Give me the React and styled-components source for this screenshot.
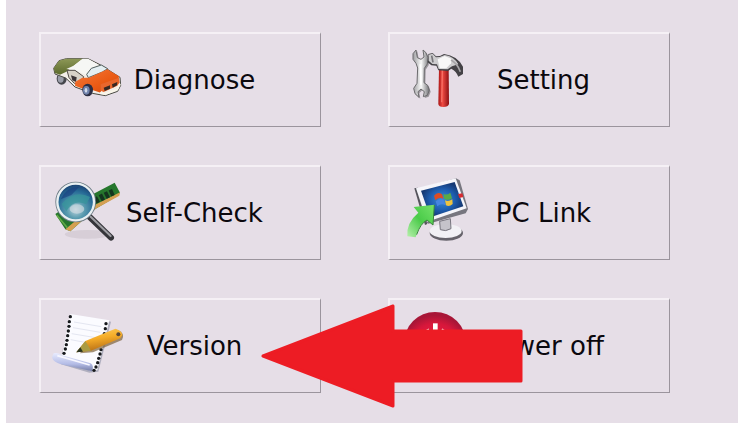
import React from "react";
import styled, { createGlobalStyle } from "styled-components";

const CarIcon = () => (
  <Icon viewBox="18 -3 216 216" aria-hidden="true">
    <defs>
      <linearGradient id="carHood" x1="0" y1="0" x2="1" y2="1">
        <stop offset="0" stopColor="#f47a3c" />
        <stop offset="0.6" stopColor="#ea5a14" />
        <stop offset="1" stopColor="#c94a14" />
      </linearGradient>
      <linearGradient id="carRear" x1="0" y1="0" x2="0" y2="1">
        <stop offset="0" stopColor="#8d9857" />
        <stop offset="1" stopColor="#5c6a2c" />
      </linearGradient>
    </defs>
    <ellipse cx="50" cy="101" rx="15" ry="18" fill="#45464c" />
    <ellipse cx="47" cy="101" rx="9" ry="12" fill="#9a9da8" />
    <path
      d="M26 70 42 47 64 41 129 41 167 60 225 97 227 121 218 139 181 152 142 145 90 126 62 99 30 87Z"
      fill="#f2eee8"
      stroke="#4b4b43"
      strokeWidth="3"
    />
    <path d="M26 70 42 47 64 41 113 41 86 62 64 80 45 89 30 84Z" fill="url(#carRear)" />
    <path d="M113 41 129 41 158 58 135 74 125 91 91 76 64 72 86 62Z" fill="#f6f7f4" />
    <path d="M66 76 90 76 116 95 108 119 88 115 72 98Z" fill="#d8d2c8" stroke="#4f4a46" strokeWidth="3" />
    <path d="M78 91 95 97 93 111 82 106Z" fill="#3b3437" />
    <path d="M125 88 139 70 169 60 188 71 172 81 130 98Z" fill="#e4eff2" stroke="#53605f" strokeWidth="3" />
    <path d="M91 110 112 98 132 98 187 73 222 94 219 108 170 123 167 143 142 135 109 130 90 122Z" fill="url(#carHood)" />
    <path d="M167 118 222 98 224 113 217 122 176 141 167 137Z" fill="#e9672d" />
    <path d="M176 128 195 121 195 131 179 138ZM201 118 217 111 216 121 203 128Z" fill="#382822" />
    <path d="M165 144 181 147 217 133 225 116" fill="none" stroke="#faf6e9" strokeWidth="6" />
    <ellipse cx="128" cy="135" rx="16" ry="19" fill="#2c2e43" />
    <ellipse cx="124" cy="136" rx="10" ry="13" fill="#7183ac" />
    <ellipse cx="123" cy="136" rx="4" ry="7" fill="#d2d9e8" />
  </Icon>
);

const ToolsIcon = () => (
  <Icon viewBox="-15 6 216 216" aria-hidden="true">
    <defs>
      <linearGradient id="steel" x1="0" y1="0" x2="1" y2="0">
        <stop offset="0" stopColor="#9c9c9f" />
        <stop offset="0.5" stopColor="#fafafa" />
        <stop offset="1" stopColor="#6f6f73" />
      </linearGradient>
      <linearGradient id="handle" x1="0" y1="0" x2="1" y2="0">
        <stop offset="0" stopColor="#a91515" />
        <stop offset="0.4" stopColor="#ef4a42" />
        <stop offset="1" stopColor="#8d1013" />
      </linearGradient>
    </defs>
    <path
      d="M33 24 24 35 24 52 33 64 38 78 36 124 26 139 30 155 42 166 39 149 48 141 58 149 55 164 67 160 73 145 68 130 57 122 58 79 67 66 69 46 62 31 54 24 57 45 48 52 37 47Z"
      transform="translate(4 4)"
      fill="#5b595c"
      opacity="0.55"
    />
    <path
      d="M33 24 24 35 24 52 33 64 38 78 36 124 26 139 30 155 42 166 39 149 48 141 58 149 55 164 67 160 73 145 68 130 57 122 58 79 67 66 69 46 62 31 54 24 57 45 48 52 37 47Z"
      fill="url(#steel)"
      stroke="#6c6b6e"
      strokeWidth="3"
    />
    <path d="M46 67 48 128" stroke="#fff" strokeWidth="5" />
    <path d="M102 80 100 186Q101 195 115 195Q130 195 132 186L131 80Z" fill="url(#handle)" />
    <path d="M112 84 110 181" stroke="#ff8478" strokeWidth="4" opacity="0.7" />
    <path
      d="M70 36 83 33 93 43 105 42 117 36Q157 41 174 74L174 96 160 104Q154 88 139 80L129 87 100 85 94 71 79 70 68 61Z"
      fill="#444246"
    />
    <path d="M71 38 83 35 93 46 104 45 119 39Q147 43 160 67L141 73 128 82 101 81 96 67 82 66 71 56Z" fill="#cdccce" />
    <path d="M98 52 119 42 141 51 138 64 124 79 104 79Z" fill="#f8f8f8" />
    <path d="M138 54Q157 64 166 89" fill="none" stroke="#a7a5a8" strokeWidth="5" />
    <path d="M80 41 84 61" stroke="#77757a" strokeWidth="5" />
  </Icon>
);

const MagnifierIcon = () => (
  <Icon viewBox="18 5 216 216" aria-hidden="true">
    <defs>
      <radialGradient id="lens" cx="0.5" cy="0.7" r="0.65">
        <stop offset="0" stopColor="#bdd3dd" />
        <stop offset="0.35" stopColor="#5b9db0" />
        <stop offset="0.75" stopColor="#266a96" />
        <stop offset="1" stopColor="#1b4374" />
      </radialGradient>
    </defs>
    <ellipse cx="127" cy="177" rx="68" ry="13" fill="#b9b2bb" opacity="0.35" />
    <path d="M31 116 50 103 146 55 209 22 225 52 217 62 152 100 76 168 61 162Z" fill="#26762d" />
    <path d="M61 162 76 168 152 100 223 61 225 51 149 89Z" fill="#d5a052" />
    <path d="M35 119 67 157" stroke="#62a846" strokeWidth="5" />
    <path d="M151 65 160 82M166 57 175 75M181 50 190 68M196 43 204 61" stroke="#14351f" strokeWidth="11" />
    <path d="M134 125 198 187" stroke="#35353a" strokeWidth="18" strokeLinecap="round" />
    <path d="M137 124 197 182" stroke="#9d9da2" strokeWidth="6" strokeLinecap="round" />
    <circle cx="92" cy="80" r="57" fill="url(#lens)" stroke="#6e7c86" strokeWidth="8" />
    <path d="M47 72Q66 32 102 35L79 59Z" fill="#193c7e" opacity="0.6" />
    <path d="M50 86Q88 42 135 65L124 87Q87 70 64 107Z" fill="#37949b" opacity="0.75" />
    <ellipse cx="96" cy="101" rx="22" ry="14" fill="#d1dce2" opacity="0.65" />
    <circle cx="92" cy="80" r="55" fill="none" stroke="#e8f0f2" strokeWidth="7" />
  </Icon>
);

const MonitorIcon = () => (
  <Icon viewBox="0 5 216 216" aria-hidden="true">
    <defs>
      <radialGradient id="screen">
        <stop offset="0" stopColor="#398edc" />
        <stop offset="0.6" stopColor="#1e5daf" />
        <stop offset="1" stopColor="#153974" />
      </radialGradient>
      <linearGradient id="greenArrow" x1="0" y1="1" x2="1" y2="0">
        <stop offset="0" stopColor="#b8f0ad" />
        <stop offset="0.5" stopColor="#4acb49" />
        <stop offset="1" stopColor="#76e26a" />
      </linearGradient>
    </defs>
    <path d="M43 39 53 37 82 146 75 149Z" fill="#55545c" />
    <ellipse cx="139" cy="173" rx="50" ry="23" fill="#66636b" />
    <ellipse cx="137" cy="167" rx="48" ry="21" fill="#f2f1f5" />
    <path d="M119 138 151 130 153 160Q137 170 121 163Z" fill="#c5c3ca" stroke="#77757e" strokeWidth="3" />
    <path d="M50 42 168 9 179 15 204 101 197 114 85 145 77 139Z" fill="#77767f" />
    <path d="M48 39 167 9 200 99 82 139Z" fill="#f5f5fa" />
    <path d="M63 46 164 20 190 93 91 126Z" fill="url(#screen)" />
    <path d="M102 61Q113 48 126 57L131 71Q118 63 106 75Z" fill="#dc4c24" />
    <path d="M130 56Q141 61 151 52L156 69Q146 77 133 71Z" fill="#58aa48" />
    <path d="M107 78Q119 67 132 75L137 90Q123 83 112 93Z" fill="#4785e0" />
    <path d="M135 75Q145 80 157 72L158 86Q148 95 138 90Z" fill="#efc33f" />
    <path d="M174 56 187 54 190 65 178 68Z" fill="#d62b32" />
    <path
      d="M41 95 103 88 99 149 81 134Q58 145 47 186L22 183Q18 143 55 112Z"
      fill="url(#greenArrow)"
    />
    <path d="M103 89 99 149 81 134Q61 145 50 178" fill="none" stroke="#38863b" strokeWidth="3" />
  </Icon>
);

const notebookHoles = [
  [76, 33], [73, 48], [72, 62], [70, 76], [68, 90], [66, 104], [64, 117], [61, 130], [57, 143],
  [183, 54], [181, 69], [178, 84], [168, 132], [165, 145], [161, 158], [158, 171], [153, 184], [147, 194],
];

const NotebookIcon = () => (
  <Icon viewBox="18 13 216 216" aria-hidden="true">
    <defs>
      <linearGradient id="roll" x1="0" y1="0" x2="0" y2="1">
        <stop offset="0" stopColor="#e9ecff" />
        <stop offset="0.6" stopColor="#b4bce6" />
        <stop offset="1" stopColor="#737ba4" />
      </linearGradient>
      <linearGradient id="pencil" x1="0" y1="0" x2="0.3" y2="1">
        <stop offset="0" stopColor="#ffd364" />
        <stop offset="0.5" stopColor="#f5ac28" />
        <stop offset="1" stopColor="#b76e16" />
      </linearGradient>
    </defs>
    <path d="M79 29 198 48 160 198 133 201 48 176 50 145Z" fill="#989bae" opacity="0.7" />
    <path d="M76 25 193 44 157 193 142 197 39 164 52 142Z" fill="#fbfbff" />
    <path d="M87 49 169 63M84 66 166 80M80 84 158 97M77 102 120 110" stroke="#e4e6f1" strokeWidth="3" />
    <path d="M26 143Q37 139 49 148L137 173Q148 180 141 197L48 176Q25 170 21 155Z" fill="url(#roll)" />
    <path d="M37 150 134 178" stroke="#f7f7ff" strokeWidth="5" />
    {notebookHoles.map(([x, y]) => (
      <circle key={`${x}-${y}`} cx={x} cy={y} r="5" fill="#17191d" />
    ))}
    <path d="M105 143 124 112 214 72Q232 75 235 91L231 103 144 140Z" fill="#74582d" opacity="0.65" />
    <path d="M94 140 121 106 211 69Q229 73 232 88L226 98 138 135Z" fill="url(#pencil)" />
    <path d="M94 140 121 106 129 119 138 135Z" fill="#aa9b42" />
    <path d="M94 140 106 125 114 138Z" fill="#2b3422" />
    <circle cx="220" cy="86" r="6" fill="#554537" />
  </Icon>
);

const PowerIcon = () => (
  <Icon viewBox="0 0 216 216" aria-hidden="true">
    <defs>
      <radialGradient id="powerDisc" cx="0.5" cy="0.6" r="0.55">
        <stop offset="0" stopColor="#f02445" />
        <stop offset="0.75" stopColor="#d8173b" />
        <stop offset="1" stopColor="#a81637" />
      </radialGradient>
    </defs>
    <circle cx="105" cy="99" r="93" fill="url(#powerDisc)" />
    <path d="M88 61A44 44 0 1 0 124 61" fill="none" stroke="#fff" strokeWidth="12" />
    <path d="M106 40V100" stroke="#fff" strokeWidth="14" />
  </Icon>
);

const menuItems = [
  { label: "Diagnose", icon: CarIcon },
  { label: "Setting", icon: ToolsIcon },
  { label: "Self-Check", icon: MagnifierIcon },
  { label: "PC Link", icon: MonitorIcon },
  { label: "Version", icon: NotebookIcon },
  { label: "Power off", icon: PowerIcon },
];

const App = () => {
  return (
    <>
      <GlobalStyle />
      <Screen>
        <Menu>
          {menuItems.map(({ label, icon: ItemIcon }) => (
            <MenuButton key={label} type="button">
              <ItemIcon />
              <Label>{label}</Label>
            </MenuButton>
          ))}
        </Menu>
        <Pointer viewBox="0 0 262 104" aria-hidden="true">
          <path
            d="M2 52 132 2V27H260V77H132V102Z"
            fill="#ed1c24"
            stroke="#ed1c24"
            strokeWidth="3"
            strokeLinejoin="round"
          />
        </Pointer>
      </Screen>
    </>
  );
};

const GlobalStyle = createGlobalStyle`
  * {
    box-sizing: border-box;
  }

  body {
    margin: 0;
    background: #fff;
  }
`;

const Screen = styled.main`
  position: relative;
  min-height: 100vh;
  margin-left: 6px;
  padding: 32px 68px 28px 33px;
  background: #e6dee7;
`;

const Menu = styled.div`
  display: grid;
  grid-template-columns: 1fr 1fr;
  gap: 38px 67px;
`;

const MenuButton = styled.button`
  display: flex;
  align-items: center;
  height: 95px;
  padding: 0 54px 0 10px;
  border: 1px solid;
  border-width: 2px 1px 1px 2px;
  border-color: #f5f0f5 #9b949d #9b949d #f5f0f5;
  background: transparent;
  color: #0b080e;
  font-family: "DejaVu Sans", Verdana, sans-serif;
  font-size: 26px;
  line-height: 32px;
  cursor: pointer;
`;

const Icon = styled.svg`
  flex: none;
  width: 72px;
  height: 72px;
`;

const Label = styled.span`
  display: flex;
  flex: 1;
  justify-content: center;
  min-width: 0;
  white-space: nowrap;
`;

/* Callout drawn over the last row of buttons */
const Pointer = styled.svg`
  position: absolute;
  top: 304px;
  left: 255px;
  width: 262px;
  height: 104px;
  pointer-events: none;
`;

export default App;
